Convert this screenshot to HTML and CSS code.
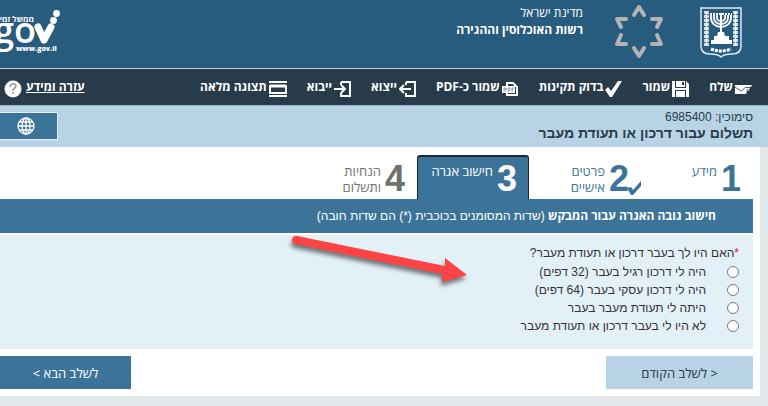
FILE: index.html
```
<!DOCTYPE html>
<html lang="he" dir="rtl">

<head>
  <meta charset="UTF-8">
  <title>תשלום עבור דרכון או תעודת מעבר</title>
  <meta name="viewport" content="width=device-width, initial-scale=1.0">
  <link rel="stylesheet" href="styles.css">
</head>
<body>

<header class="site-header">
  <svg class="emblem" width="42" height="52" viewBox="0 0 42 52" fill="none" stroke="#fff">
    <path d="M1 1h40v38c0 6-3 8-9 8-6 0-9 1-11 3-2-2-5-3-11-3-6 0-9-2-9-8z" stroke="#dce8f2" stroke-width="1.5"/>
    <path d="M6.500 4v35M35.500 4v35" stroke-width="5" stroke-dasharray="3 1" stroke="#c9dae6"/>
    <path d="M6.500 4v35M35.500 4v35" stroke-width="1.500"/>
    <path d="M11 8v3a10 9 0 0 0 20 0V8M14 8v3a7 6 0 0 0 14 0V8M17 8v3a4 3 0 0 0 8 0V8" stroke-width="1.800"/>
    <path d="M10 7h22" stroke-width="2" stroke-dasharray="2 1"/>
    <path d="M21 6v24" stroke-width="2"/>
    <path d="M18 25h6l1 4h4v4h3v4H11v-4h3v-4h3z" fill="#fff" stroke="none"/>
    <path d="M11 42q10 4 20 0" stroke-width="3" stroke-dasharray="3 1"/>
  </svg>
  <svg class="star" width="50" height="56" viewBox="0 0 50 56" fill="none" stroke="#b3b3b3" stroke-width="4" stroke-linecap="round" stroke-linejoin="round">
    <path d="M20 11l5-8 5 8M38 15h9l-4 8M43 31l4 9h-9M20 44l5 8 5-8M12 15H3l4 8M7 31l-4 9h9"/>
  </svg>
  <div class="office">
    <div>מדינת ישראל</div>
    <strong>רשות האוכלוסין וההגירה</strong>
  </div>
  <div class="gov-logo" dir="ltr">
    <svg width="62" height="46" viewBox="0 0 62 46" fill="#fff">
      <text class="gov-sub" x="34" y="12" text-anchor="end">ממשל זמין</text>
      <text class="gov-name" x="-6" y="33">go</text>
      <path d="M38 17l6 13 7-13" fill="none" stroke="#fff" stroke-width="7" stroke-linejoin="round" stroke-linecap="round"/>
      <circle cx="53.500" cy="10.500" r="3.400"/>
      <circle cx="56.500" cy="3.500" r="3.400"/>
      <text class="gov-url" x="16" y="41">www.gov.il</text>
    </svg>
  </div>
</header>

<nav class="toolbar">
  <a href="#">
    <svg width="17" height="18" viewBox="0 0 17 18"><path d="M0 5h17l-1 2h-1l-1 4h-2l-1 3H0z" fill="#fff"/><path d="M0 7l6 4 5-4M11 7.500h5M11 10h4" fill="none" stroke="#273b4a" stroke-width=".8"/></svg>
    שלח
  </a>
  <a href="#">
    <svg width="17" height="18" viewBox="0 0 17 18"><path d="M0 1h14l3 3v13H0z" fill="#fff"/><path d="M3 1h1v6h9V1h1v7H3zM10 2h2v3h-2zM3 10h11v7h-1v-6H4v6H3z" fill="#273b4a"/></svg>
    שמור
  </a>
  <a href="#">
    <svg width="17" height="18" viewBox="0 0 17 18"><path d="M0 10l3-3 3 4L13 1h4L7 17H5z" fill="#fff"/></svg>
    בדוק תקינות
  </a>
  <a href="#">
    <svg width="17" height="18" viewBox="0 0 17 18"><path d="M5 6V3h6l4 4v8H5v-2" fill="none" stroke="#fff" stroke-width="2"/><path d="M0 6h13v7H0z" fill="#fff"/><path d="M2 12V8h2v2H2M6 8v3h1l1-1V8zM10 12V8h2M10 10h1" fill="none" stroke="#71818d" stroke-width=".8"/></svg>
    שמור כ-PDF
  </a>
  <a href="#">
    <svg width="17" height="18" viewBox="0 0 17 18" fill="none" stroke="#fff" stroke-width="2"><path d="M7 2h9v14H7v-3M7 5V2M1 9h11M5 5L1 9l4 4"/></svg>
    ייצוא
  </a>
  <a href="#">
    <svg width="17" height="18" viewBox="0 0 17 18" fill="none" stroke="#fff" stroke-width="2"><path d="M7 2h9v14H7v-3M7 5V2M0 9h11M7 5l4 4-4 4"/></svg>
    ייבוא
  </a>
  <a href="#">
    <svg width="18" height="18" viewBox="0 0 18 18" fill="none" stroke="#fff"><path d="M0 2h18M0 16h18" stroke-width="2"/><path d="M1 6h16v7H1z" stroke-width="2"/><path d="M1 6h16" stroke-width="3"/></svg>
    תצוגה מלאה
  </a>
  <span class="help">
    <a href="#">עזרה ומידע</a>
    <svg width="18" height="18" viewBox="0 0 18 18"><circle cx="9" cy="9" r="8.500" fill="#fff"/><path d="M6 7c0-4 6-4 6-1 0 2-3 2-3 5M9 12v2" fill="none" stroke="#8d969c" stroke-width="1.500"/></svg>
  </span>
</nav>

<div class="title-bar">
  <div>
    <div class="reference">סימוכין: 6985400</div>
    <h1>תשלום עבור דרכון או תעודת מעבר</h1>
  </div>
  <button class="language" type="button" aria-label="שפה">
    <svg width="18" height="18" viewBox="0 0 18 18" fill="none" stroke="#fff" stroke-width="1.300"><circle cx="9" cy="9" r="8"/><ellipse cx="9" cy="9" rx="4" ry="8"/><path d="M9 1v16M1 9h16M2 5h14M2 13h14"/></svg>
  </button>
</div>

<main class="panel">
  <ol class="steps">
    <li class="step"><b>1</b><span>מידע</span></li>
    <li class="step done">
      <b>2<svg class="tick" width="14" height="14" viewBox="0 0 14 14"><path d="M0 7l4-1 2 3 8-9v5L6 14H4z" fill="#3c7499"/></svg></b>
      <span>פרטים<br>אישיים</span>
    </li>
    <li class="step active"><b>3</b><span>חישוב אגרה</span></li>
    <li class="step pending"><b>4</b><span>הנחיות<br>ותשלום</span></li>
  </ol>

  <h2 class="section-title"><strong>חישוב גובה האגרה עבור המבקש</strong> (שדות המסומנים בכוכבית (*) הם שדות חובה)</h2>

  <form>
    <fieldset class="question">
      <legend><span class="required">*</span>האם היו לך בעבר דרכון או תעודת מעבר?</legend>
      <label><input type="radio" name="passport">היה לי דרכון רגיל בעבר (32 דפים)</label>
      <label><input type="radio" name="passport">היה לי דרכון עסקי בעבר (64 דפים)</label>
      <label><input type="radio" name="passport">היתה לי תעודת מעבר בעבר</label>
      <label><input type="radio" name="passport">לא היו לי בעבר דרכון או תעודת מעבר</label>
    </fieldset>

    <div class="buttons">
      <button class="prev" type="button">&lt; לשלב הקודם</button>
      <button class="next" type="button">לשלב הבא &gt;</button>
    </div>
  </form>

  <!-- חץ שמצביע על השאלה -->
  <svg class="arrow" width="184" height="56" viewBox="0 0 184 56">
    <path d="M9 2L157 32V24L179 41 154 48V40L7 10A4 4 0 0 1 9 2z" fill="#fd4343"/>
  </svg>
</main>

</body>
</html>
```
FILE: styles.css
```
html, body {
  margin: 0;
  padding: 0;
}

body {
  font-family: "Open Sans", "Liberation Sans", sans-serif;
  font-size: 13px;
  background-color: #e2e7ea;
  color: #333;
}

.site-header {
  display: flex;
  align-items: flex-start;
  height: 69px;
  padding-right: 26px;
  box-sizing: border-box;
  background: #285c7e;
  border-bottom: 1px solid #c3ccd2;
  color: #fff;
  overflow: hidden;
}

.emblem {
  margin-top: 7px;
}

.star {
  margin: 4px 36px 0 0;
}

.office {
  margin: 4px 31px 0 0;
  font-size: 12px;
  line-height: 17px;
}

.gov-logo {
  margin: 10px auto 0 0;
}

.gov-logo svg {
  display: block;
}

.gov-sub {
  font-size: 8px;
  font-weight: bold;
}

.gov-name {
  font-size: 36px;
  font-weight: 600;
}

.gov-url {
  font-size: 7px;
  font-weight: 800;
}

.toolbar {
  display: flex;
  align-items: center;
  gap: 20px;
  height: 36px;
  padding: 0 16px 0 4px;
  background: #273b4a;
  font-size: 12px;
  font-weight: bold;
  white-space: nowrap;
}

.toolbar a {
  display: flex;
  align-items: center;
  gap: 2px;
  color: #fff;
  line-height: 18px;
  text-decoration: none;
}

.toolbar > a svg {
  margin-top: 4px;
}

.help {
  display: flex;
  align-items: center;
  gap: 4px;
  margin-right: auto;
}

.toolbar .help a {
  text-decoration: underline;
}

.help svg {
  margin-top: 4px;
}

.title-bar {
  display: flex;
  justify-content: space-between;
  align-items: flex-start;
  height: 42px;
  padding: 3px 15px 0 0;
  box-sizing: border-box;
  background: #b8d3e6;
  border-top: 1px solid #9cb5c5;
  color: #273b4a;
  font-family: "Liberation Sans", sans-serif;
}

.reference {
  font-size: 12px;
  line-height: 16px;
}

h1 {
  margin: 0;
  font-size: 14px;
  line-height: 17px;
}

.language {
  width: 58px;
  height: 28px;
  margin-top: 3px;
  padding: 0 6px 0 0;
  border: 1px solid #e3f0f8;
  border-left: 0;
  background: #3c7499;
}

.language svg {
  display: block;
  margin: 0 auto;
}

.panel {
  position: relative;
  margin-right: 8px;
  padding: 8px 7px 7px 0;
  background: #fff;
}

.steps {
  display: flex;
  margin: 0;
  padding: 0;
  list-style: none;
}

.step {
  display: flex;
  align-items: flex-start;
  gap: 4px;
  width: 112px;
  height: 44px;
  padding: 6px 12px 0 0;
  box-sizing: border-box;
  color: #3c7499;
  font-size: 13px;
  line-height: 16px;
}

.step b {
  position: relative;
  font-family: "Liberation Sans", sans-serif;
  font-size: 36px;
  line-height: 36px;
}

.step span {
  padding-top: 2px;
}

.step.active {
  padding: 4px 11px 0 0;
  border: 1px solid #1c2730;
  border-width: 2px 1px 0;
  border-radius: 3px 3px 0 0;
  background: #3c7499;
  color: #fff;
}

.step.pending {
  color: #707070;
}

.tick {
  position: absolute;
  right: -12px;
  bottom: 2px;
}

.section-title {
  margin: 0 0 2px;
  padding: 0 37px 0 0;
  background: #3c7499;
  color: #fff;
  font-family: "Liberation Sans", sans-serif;
  font-size: 12px;
  font-weight: normal;
  line-height: 34px;
}

.section-title strong {
  font-family: "Open Sans", sans-serif;
}

.question {
  margin: 0;
  padding: 8px 14px 14px 0;
  border: 0;
  background: #e3f0f8;
  font-family: "Liberation Sans", sans-serif;
  font-size: 12px;
}

.question legend {
  float: right;
  width: 100%;
  padding: 0;
  line-height: 20px;
}

.required {
  color: #e02020;
}

.question label {
  display: flex;
  align-items: center;
  clear: both;
  height: 18px;
}

.question input {
  width: 12px;
  height: 12px;
  margin: 0 0 0 21px;
}

.buttons {
  display: flex;
  justify-content: space-between;
  margin-top: 7px;
}

.buttons button {
  height: 33px;
  border: 0;
  font-family: inherit;
  font-size: 13px;
}

.prev {
  width: 147px;
  background: #b8d3e6;
  color: #273b4a;
}

.next {
  width: 131px;
  background: #3c7499;
  color: #fff;
}

.arrow {
  position: absolute;
  top: 87px;
  left: 288px;
  filter: drop-shadow(-1px 4px 2px rgba(0, 0, 0, 0.5));
}
```
